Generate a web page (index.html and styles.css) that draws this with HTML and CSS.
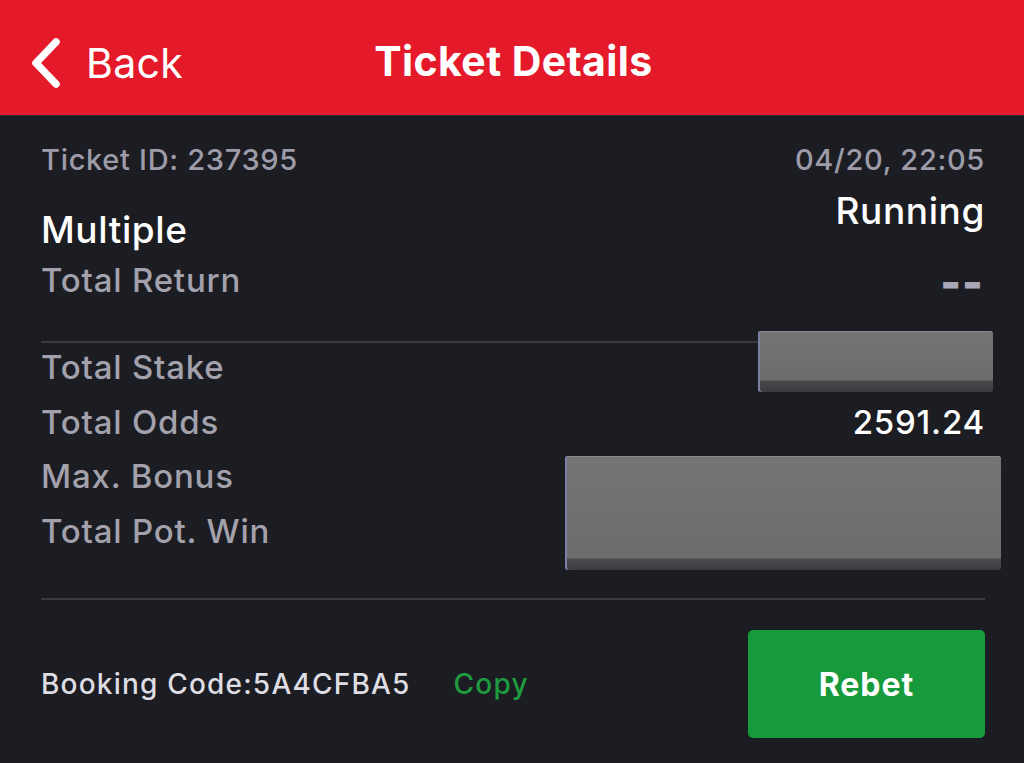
FILE: index.html
```html
<!DOCTYPE html>
<html>
<head>
<meta charset="utf-8">
<link rel="stylesheet" href="styles.css">
</head>
<body>
<header class="topbar">
  <div class="back">
    <svg class="chev" width="40" height="60" viewBox="0 0 40 60"><path d="M29 9 L9 30 L29 51" fill="none" stroke="#fff" stroke-width="7.5" stroke-linecap="round" stroke-linejoin="round"/></svg>
    <span>Back</span>
  </div>
  <h1 class="title">Ticket Details</h1>
</header>
<main class="content">
  <section class="summary">
    <div class="col left">
      <div class="meta">Ticket ID: 237395</div>
      <div class="type">Multiple</div>
      <div class="label">Total Return</div>
    </div>
    <div class="col right">
      <div class="meta">04/20, 22:05</div>
      <div class="status">Running</div>
      <div class="dash">--</div>
    </div>
  </section>
  <div class="divider"></div>
  <section class="rows">
    <div class="row"><span class="label">Total Stake</span><span class="value"></span></div>
    <div class="row"><span class="label">Total Odds</span><span class="value">2591.24</span></div>
    <div class="row"><span class="label">Max. Bonus</span><span class="value"></span></div>
    <div class="row"><span class="label">Total Pot. Win</span><span class="value"></span></div>
    <div class="redact r1"></div>
    <div class="redact r2"></div>
  </section>
  <div class="divider d2"></div>
  <section class="booking">
    <div class="code">Booking Code:5A4CFBA5<span class="copy">Copy</span></div>
    <button class="rebet">Rebet</button>
  </section>
</main>
</body>
</html>
```
FILE: styles.css
```css
* { box-sizing: border-box; }
html, body { margin: 0; padding: 0; }
body {
  background: #1c1d22;
  font-family: "Inter", "Roboto", sans-serif;
  width: 1024px;
  height: 763px;
  overflow: hidden;
}
.topbar {
  height: 116px;
  background: #e41a2b;
  border-bottom: 1px solid #2d2e34;
  position: relative;
  display: flex;
  align-items: center;
  justify-content: center;
}
.back {
  position: absolute;
  left: 27px;
  top: 33px;
  display: flex;
  align-items: center;
  gap: 19px;
  color: #fff;
  font-size: 41px;
  font-weight: 400;
  letter-spacing: 0.3px;
}
.title {
  margin: 0;
  color: #fff;
  font-size: 41px;
  font-weight: 700;
  letter-spacing: 0.4px;
  padding-left: 3px;
  padding-top: 6px;
}
.content {
  padding: 0 39px 0 41px;
}
.summary {
  display: flex;
  justify-content: space-between;
  padding-top: 26px;
}
.col { display: flex; flex-direction: column; }
.right { align-items: flex-end; }
.meta {
  color: #9d9ca8;
  font-size: 29px;
  line-height: 36px;
  font-weight: 500;
  letter-spacing: 0.7px;
}
.type, .status {
  color: #fff;
  font-size: 37px;
  line-height: 44px;
  font-weight: 500;
  letter-spacing: 0.6px;
}
.type { margin-top: 30px; }
.status { margin-top: 11px; }
.label {
  color: #a2a1ac;
  font-size: 33px;
  line-height: 40px;
  font-weight: 500;
  letter-spacing: 0.8px;
}
.left .label { margin-top: 8px; }
.dash {
  color: #a8a7b6;
  font-size: 44px;
  font-weight: 900;
  line-height: 40px;
  letter-spacing: 1px;
  margin-top: 29px;
  margin-right: 1px;
}
.divider {
  height: 2px;
  background: #3a3b41;
  margin-top: 39px;
}
.rows {
  position: relative;
  margin-top: -3px;
}
.row {
  display: flex;
  justify-content: space-between;
  height: 54.5px;
  align-items: center;
}
.row .label { line-height: 54px; }
.value {
  color: #fff;
  font-size: 33px;
  font-weight: 500;
  letter-spacing: 0.8px;
}
.redact {
  position: absolute;
  border-radius: 3px;
  background: linear-gradient(to bottom, #757575 0%, #6c6c6c calc(100% - 12px), #4a4a4e calc(100% - 11px), #3c3c40 100%);
  box-shadow: inset 2px 0 0 #7b7fa8, inset 0 1px 0 #8a8a8a;
}
.r1 { left: 717px; top: -9px; width: 235px; height: 61px; }
.r2 { left: 524px; top: 116px; width: 436px; height: 114px; }
.d2 { margin-top: 40px; }
.booking {
  display: flex;
  justify-content: space-between;
  align-items: center;
  margin-top: 30px;
}
.code {
  color: #dedde4;
  font-size: 28px;
  font-weight: 500;
  letter-spacing: 1.2px;
}
.copy {
  color: #1e9b3e;
  margin-left: 43px;
}
.rebet {
  width: 237px;
  height: 108px;
  background: #169a3c;
  border: none;
  border-radius: 5px;
  color: #fff;
  font-family: "Inter", sans-serif;
  font-size: 32px;
  font-weight: 700;
  letter-spacing: 1px;
  padding: 0;
}
```
